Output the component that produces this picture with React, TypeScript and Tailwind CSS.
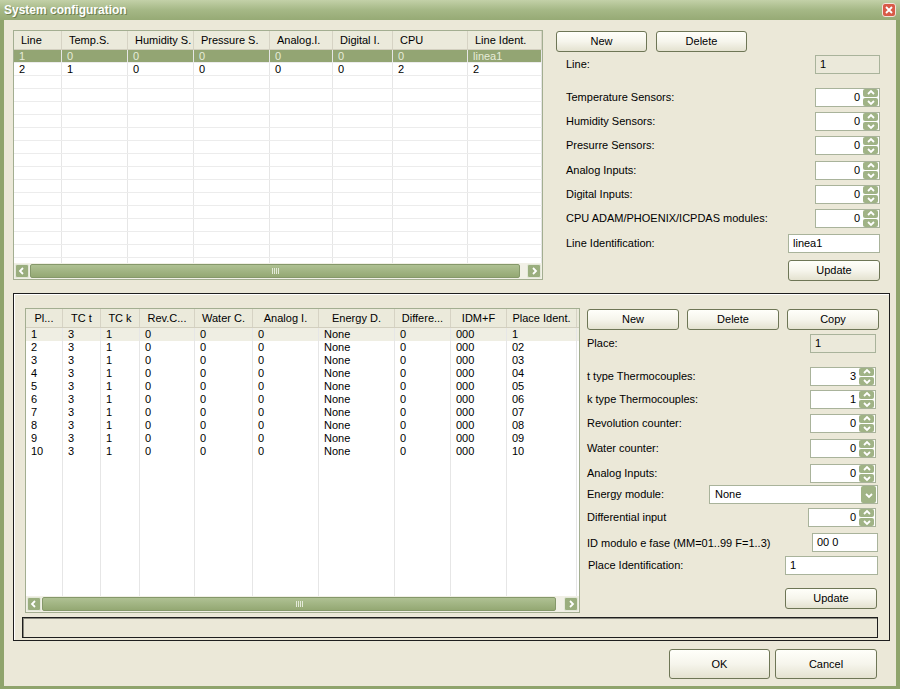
import React from "react";

type Col = { label: string; w: string };

const topCols: Col[] = [
  { label: "Line", w: "w-[48px]" },
  { label: "Temp.S.", w: "w-[66px]" },
  { label: "Humidity S.", w: "w-[66px]" },
  { label: "Pressure S.", w: "w-[76px]" },
  { label: "Analog.I.", w: "w-[63px]" },
  { label: "Digital I.", w: "w-[60px]" },
  { label: "CPU", w: "w-[75px]" },
  { label: "Line Ident.", w: "w-[74px]" },
];

const topRows = [
  ["1", "0", "0", "0", "0", "0", "0", "linea1"],
  ["2", "1", "0", "0", "0", "0", "2", "2"],
];

const placeCols: Col[] = [
  { label: "Pl...", w: "w-[37px]" },
  { label: "TC t", w: "w-[38px]" },
  { label: "TC k", w: "w-[39px]" },
  { label: "Rev.C...", w: "w-[55px]" },
  { label: "Water C.", w: "w-[58px]" },
  { label: "Analog I.", w: "w-[66px]" },
  { label: "Energy D.", w: "w-[76px]" },
  { label: "Differe...", w: "w-[56px]" },
  { label: "IDM+F", w: "w-[56px]" },
  { label: "Place Ident.", w: "w-[70px]" },
];

const placeIds = ["1", "02", "03", "04", "05", "06", "07", "08", "09", "10"];
const placeRows = placeIds.map((id, i) => [String(i + 1), "3", "1", "0", "0", "0", "None", "0", "000", id]);

const Chevron = ({ dir }: { dir: "left" | "right" | "up" | "down" }) => {
  const pts = {
    left: "5,1 2,4 5,7",
    right: "3,1 6,4 3,7",
    up: "1,5 4,2 7,5",
    down: "1,3 4,6 7,3",
  }[dir];
  return (
    <svg width="8" height="8" viewBox="0 0 8 8">
      <polyline points={pts} fill="none" stroke="white" strokeWidth="1.8" />
    </svg>
  );
};

const ArrowBtn = ({ dir }: { dir: "left" | "right" }) => (
  <div className="flex h-[14px] w-[14px] items-center justify-center rounded-[2px] border border-[#e3e8d8] bg-[#9aae7e]">
    <Chevron dir={dir} />
  </div>
);

const HScroll = ({ thumb }: { thumb: string }) => (
  <div className="flex h-[16px] items-center gap-px bg-[#f1f0e6] px-px">
    <ArrowBtn dir="left" />
    <div className="flex flex-1 items-center">
      <div
        className={`${thumb} flex h-[14px] items-center justify-center rounded-[2px] border border-[#85986a] bg-gradient-to-b from-[#afc193] to-[#94a873]`}
      >
        <div className="flex gap-px">
          <div className="h-[6px] w-px bg-[#e4ead9]" />
          <div className="h-[6px] w-px bg-[#e4ead9]" />
          <div className="h-[6px] w-px bg-[#e4ead9]" />
          <div className="h-[6px] w-px bg-[#e4ead9]" />
        </div>
      </div>
    </div>
    <ArrowBtn dir="right" />
  </div>
);

const Grid = ({
  cols,
  rows,
  fill,
  box,
  thumb,
  selected,
  centerHead,
  hLines,
}: {
  cols: Col[];
  rows: string[][];
  fill: number;
  box: string;
  thumb: string;
  selected: string;
  centerHead?: boolean;
  hLines?: boolean;
}) => {
  const all = [...rows, ...Array.from({ length: fill }, () => cols.map(() => ""))];
  return (
    <div className={`${box} flex flex-col border border-[#a3ae91] bg-white`}>
      <div className="flex h-[19px] shrink-0 border-b border-[#d2cfbf] bg-[#ebeadb]">
        {cols.map((c) => (
          <div
            key={c.label}
            className={`${c.w} flex shrink-0 items-center border-r border-[#d6d3c4] ${
              centerHead ? "justify-center" : "pl-[7px]"
            } whitespace-nowrap`}
          >
            {c.label}
          </div>
        ))}
      </div>
      <div className="flex-1 overflow-hidden">
        {all.map((r, i) => (
          <div
            key={i}
            className={`flex h-[13px] ${hLines ? "border-b border-[#ececec]" : ""} ${
              i === 0 ? selected : ""
            }`}
          >
            {r.map((v, j) => (
              <div
                key={j}
                className={`${cols[j].w} shrink-0 overflow-hidden whitespace-nowrap border-r border-[#e6e6e6] pl-[5px] leading-[13px]`}
              >
                {v}
              </div>
            ))}
          </div>
        ))}
      </div>
      <HScroll thumb={thumb} />
    </div>
  );
};

const Btn = ({ label, cls }: { label: string; cls: string }) => (
  <button
    className={`${cls} flex items-center justify-center rounded-[3px] border border-[#6e7656] bg-gradient-to-b from-[#fffffa] via-[#f6f5ec] to-[#e4e2d0] text-black`}
  >
    {label}
  </button>
);

const Spin = ({ value, cls }: { value: string; cls: string }) => (
  <div className={`${cls} flex h-[19px] items-center border border-[#a9b39b] bg-white`}>
    <span className="flex-1 pr-[3px] text-right">{value}</span>
    <div className="mr-px flex h-[17px] w-[15px] flex-col gap-px">
      <div className="flex flex-1 items-center justify-center rounded-[2px] bg-[#a0b386]">
        <Chevron dir="up" />
      </div>
      <div className="flex flex-1 items-center justify-center rounded-[2px] bg-[#a0b386]">
        <Chevron dir="down" />
      </div>
    </div>
  </div>
);

const TextBox = ({ value, cls, ro }: { value: string; cls: string; ro?: boolean }) => (
  <div
    className={`${cls} flex h-[19px] items-center border border-[#a9b39b] pl-[4px] ${
      ro ? "bg-[#ebe9da]" : "bg-white"
    }`}
  >
    {value}
  </div>
);

const Row = ({ label, children, cls }: { label: string; children: React.ReactNode; cls: string }) => (
  <div className={`${cls} flex h-[19px] items-center justify-between`}>
    <span className="whitespace-nowrap">{label}</span>
    {children}
  </div>
);

export default function App() {
  return (
    <div className="flex h-[689px] w-[900px] flex-col bg-[#8fa46c] font-['Liberation_Sans',Arial,sans-serif] text-[11px] text-black">
      <div className="flex h-[20px] shrink-0 items-center justify-between bg-gradient-to-b from-[#c3d1a8] via-[#a5b886] to-[#96aa75] pl-[4px] pr-[4px]">
        <span className="text-[12px] font-bold text-white [text-shadow:1px_1px_0_#6f8150]">
          System configuration
        </span>
        <div className="flex h-[14px] w-[14px] items-center justify-center rounded-[3px] border border-[#f2e4dc] bg-[#d85a47]">
          <svg width="8" height="8" viewBox="0 0 8 8">
            <path d="M1 1L7 7M7 1L1 7" stroke="white" strokeWidth="1.8" />
          </svg>
        </div>
      </div>

      <div className="mx-[4px] mb-[3px] flex flex-1 flex-col bg-[#ebe8d8]">
        <div className="ml-[9px] mt-[10px] flex">
          <Grid
            cols={topCols}
            rows={topRows}
            fill={16}
            box="h-[250px] w-[530px]"
            thumb="w-[490px]"
            selected="bg-[#93a573] text-[#e6ecd9]"
            hLines
          />
          <div className="ml-[13px] flex w-[324px] flex-col">
            <div className="mt-px flex gap-[9px]">
              <Btn label="New" cls="h-[21px] w-[91px]" />
              <Btn label="Delete" cls="h-[21px] w-[91px]" />
            </div>
            <Row label="Line:" cls="mt-[3px] pl-[10px]">
              <TextBox value="1" cls="w-[65px]" ro />
            </Row>
            <Row label="Temperature Sensors:" cls="mt-[14px] pl-[10px]">
              <Spin value="0" cls="w-[65px]" />
            </Row>
            <Row label="Humidity Sensors:" cls="mt-[5px] pl-[10px]">
              <Spin value="0" cls="w-[65px]" />
            </Row>
            <Row label="Presurre Sensors:" cls="mt-[5px] pl-[10px]">
              <Spin value="0" cls="w-[65px]" />
            </Row>
            <Row label="Analog Inputs:" cls="mt-[6px] pl-[10px]">
              <Spin value="0" cls="w-[65px]" />
            </Row>
            <Row label="Digital Inputs:" cls="mt-[5px] pl-[10px]">
              <Spin value="0" cls="w-[65px]" />
            </Row>
            <Row label="CPU ADAM/PHOENIX/ICPDAS modules:" cls="mt-[5px] pl-[10px]">
              <Spin value="0" cls="w-[65px]" />
            </Row>
            <Row label="Line Identification:" cls="mt-[6px] pl-[10px]">
              <TextBox value="linea1" cls="w-[92px]" />
            </Row>
            <div className="mt-[7px] flex justify-end">
              <Btn label="Update" cls="h-[21px] w-[92px]" />
            </div>
          </div>
        </div>

        <div className="ml-[9px] mt-[12px] flex h-[348px] w-[877px] flex-col border border-[#1e1e1e] shadow-[inset_1px_1px_0_#ffffff]">
          <div className="ml-[11px] mt-[14px] flex">
            <Grid
              cols={placeCols}
              rows={placeRows}
              fill={12}
              box="h-[305px] w-[555px]"
              thumb="w-[514px]"
              selected="bg-[#efeee3]"
              centerHead
            />
            <div className="ml-[7px] flex w-[292px] flex-col">
              <div className="mt-px flex gap-[8px]">
                <Btn label="New" cls="h-[21px] w-[92px]" />
                <Btn label="Delete" cls="h-[21px] w-[92px]" />
                <Btn label="Copy" cls="h-[21px] w-[92px]" />
              </div>
              <Row label="Place:" cls="mt-[4px] pr-[3px]">
                <TextBox value="1" cls="w-[66px]" ro />
              </Row>
              <Row label="t type Thermocouples:" cls="mt-[14px] pr-[3px]">
                <Spin value="3" cls="w-[66px]" />
              </Row>
              <Row label="k type Thermocouples:" cls="mt-[4px] pr-[3px]">
                <Spin value="1" cls="w-[66px]" />
              </Row>
              <Row label="Revolution counter:" cls="mt-[5px] pr-[3px]">
                <Spin value="0" cls="w-[66px]" />
              </Row>
              <Row label="Water counter:" cls="mt-[6px] pr-[3px]">
                <Spin value="0" cls="w-[66px]" />
              </Row>
              <Row label="Analog Inputs:" cls="mt-[6px] pr-[3px]">
                <Spin value="0" cls="w-[66px]" />
              </Row>
              <Row label="Energy module:" cls="mt-[2px] pr-px">
                <div className="flex h-[19px] w-[169px] items-center border border-[#a9b39b] bg-white">
                  <span className="flex-1 pl-[5px]">None</span>
                  <div className="mr-px flex h-[17px] w-[15px] items-center justify-center rounded-[2px] bg-[#a0b386]">
                    <Chevron dir="down" />
                  </div>
                </div>
              </Row>
              <Row label="Differential input" cls="mt-[4px] pr-[3px]">
                <Spin value="0" cls="w-[68px]" />
              </Row>
              <Row label="ID modulo e fase (MM=01..99 F=1..3)" cls="mt-[7px] pr-px">
                <TextBox value="00 0" cls="w-[66px] -mt-[3px]" />
              </Row>
              <Row label="Place Identification:" cls="mt-[3px] pl-px pr-px">
                <TextBox value="1" cls="w-[93px]" />
              </Row>
              <div className="mt-[13px] flex justify-end pr-[2px]">
                <Btn label="Update" cls="h-[21px] w-[92px]" />
              </div>
            </div>
          </div>
          <div className="ml-[8px] mt-[4px] h-[21px] w-[856px] border border-[#1e1e1e] shadow-[inset_1px_1px_0_#8a8a80]" />
        </div>

        <div className="mr-[19px] mt-[8px] flex justify-end gap-[5px]">
          <Btn label="OK" cls="h-[30px] w-[101px]" />
          <Btn label="Cancel" cls="h-[30px] w-[102px]" />
        </div>
      </div>
    </div>
  );
}
